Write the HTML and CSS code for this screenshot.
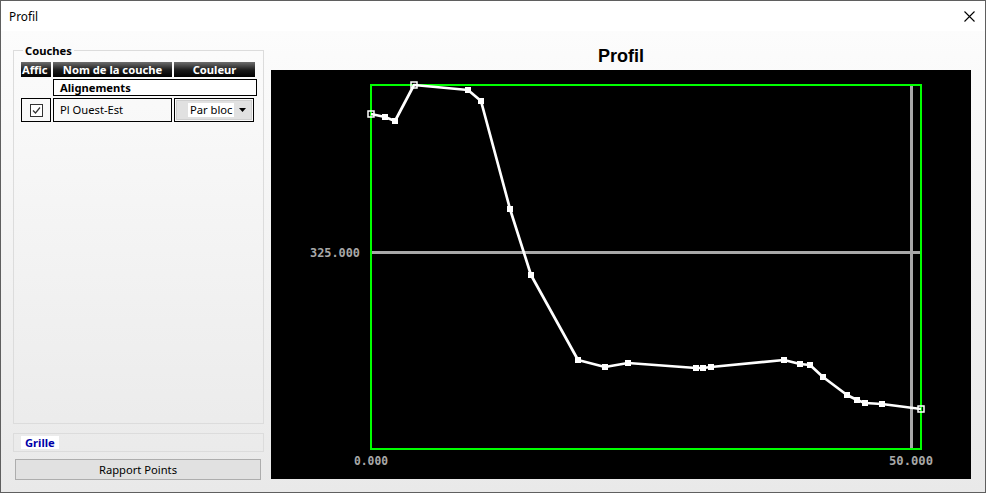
FILE: index.html
```html
<!DOCTYPE html>
<html>
<head>
<meta charset="utf-8">
<title>Profil</title>
<link rel="stylesheet" href="styles.css">
</head>
<body>
<div class="window">
  <div class="titlebar">
    <span class="title">Profil</span>
    <svg class="close" width="11" height="11" viewBox="0 0 11 11"><path d="M0.5 0.5 L10.5 10.5 M10.5 0.5 L0.5 10.5" stroke="#000" stroke-width="1.1" fill="none"/></svg>
  </div>
  <div class="content">
    <div class="left">
      <div class="group couches">
        <div class="legend">Couches</div>
        <div class="hdr">
          <div class="hc c1">Affic</div>
          <div class="hc c2">Nom de la couche</div>
          <div class="hc c3">Couleur</div>
        </div>
        <div class="section">Alignements</div>
        <div class="row">
          <div class="cell c1 chk">
            <svg width="13" height="13" viewBox="0 0 13 13"><rect x="0.5" y="0.5" width="12" height="12" fill="#fff" stroke="#333"/><path d="M3 6.5 L5.5 9 L10 3.5" stroke="#333" stroke-width="1.2" fill="none"/></svg>
          </div>
          <div class="cell c2 name">Pl Ouest-Est</div>
          <div class="cell c3b">
            <div class="combo">
              <span class="val">Par bloc</span>
              <svg class="arrow" width="7" height="4" viewBox="0 0 7 4"><path d="M0 0 H7 L3.5 4 Z" fill="#000"/></svg>
            </div>
          </div>
        </div>
      </div>
      <div class="group grille">
        <div class="glabel">Grille</div>
      </div>
      <button class="btn">Rapport Points</button>
    </div>
    <div class="right">
      <div class="ctitle">Profil</div>
      <div class="chart">
        <svg width="700" height="409" viewBox="271 70 700 409">
          <rect x="271" y="70" width="700" height="409" fill="#000"/>
          <line x1="372" y1="252.5" x2="920" y2="252.5" stroke="#a8a8a8" stroke-width="3"/>
          <line x1="911.5" y1="86" x2="911.5" y2="448" stroke="#a8a8a8" stroke-width="3"/>
          <rect x="371" y="85" width="550" height="364" fill="none" stroke="#00ff00" stroke-width="2"/>
          <polyline fill="none" stroke="#fff" stroke-width="2.7" stroke-linejoin="round" points="371,114 385,117 395,121 414,85 468,90 481,101 510,209 531,275 578,360 605,367 628,363 696,368 703,368 711,367 784,360 800,364 810,365 823,377 847,395 857,400 865,403 882,404 921,409"/>
          <g fill="#fff">
            <rect x="382" y="114" width="6" height="6"/>
            <rect x="392" y="118" width="6" height="6"/>
            <rect x="465" y="87" width="6" height="6"/>
            <rect x="478" y="98" width="6" height="6"/>
            <rect x="507" y="206" width="6" height="6"/>
            <rect x="528" y="272" width="6" height="6"/>
            <rect x="575" y="357" width="6" height="6"/>
            <rect x="602" y="364" width="6" height="6"/>
            <rect x="625" y="360" width="6" height="6"/>
            <rect x="693" y="365" width="6" height="6"/>
            <rect x="700" y="365" width="6" height="6"/>
            <rect x="708" y="364" width="6" height="6"/>
            <rect x="781" y="357" width="6" height="6"/>
            <rect x="797" y="361" width="6" height="6"/>
            <rect x="807" y="362" width="6" height="6"/>
            <rect x="820" y="374" width="6" height="6"/>
            <rect x="844" y="392" width="6" height="6"/>
            <rect x="854" y="397" width="6" height="6"/>
            <rect x="862" y="400" width="6" height="6"/>
            <rect x="879" y="401" width="6" height="6"/>
          </g>
          <g fill="none" stroke="#fff" stroke-width="1.5">
            <rect x="368" y="111" width="6" height="6"/>
            <rect x="411" y="82" width="6" height="6"/>
            <rect x="918" y="406" width="6" height="6"/>
          </g>
          <g class="axis">
            <text x="310" y="257" textLength="50" lengthAdjust="spacingAndGlyphs">325.000</text>
            <text x="354" y="465" textLength="34" lengthAdjust="spacingAndGlyphs">0.000</text>
            <text x="889" y="465" textLength="44" lengthAdjust="spacingAndGlyphs">50.000</text>
          </g>
        </svg>
      </div>
    </div>
  </div>
</div>
</body>
</html>
```
FILE: styles.css
```css
* { box-sizing: border-box; }
html, body { margin: 0; padding: 0; }
body {
  width: 986px;
  height: 493px;
  overflow: hidden;
  font-family: "Noto Sans", "Open Sans", sans-serif;
  font-size: 11.2px;
  color: #000;
  background: #fff;
}
.window {
  width: 986px;
  height: 493px;
  border: 1px solid #5f5f5f;
  display: flex;
  flex-direction: column;
  background: #fff;
}
.titlebar {
  height: 30px;
  flex: none;
  display: flex;
  align-items: center;
  justify-content: space-between;
  padding: 0 10px 0 8px;
  background: #fff;
}
.title { font-size: 11.8px; line-height: 16px; }
.close { display: block; }
.content {
  flex: 1;
  display: flex;
  background: linear-gradient(#fcfcfc, #e9e9e9);
}
.left {
  width: 270px;
  flex: none;
  padding: 19px 0 0 12px;
  display: flex;
  flex-direction: column;
  align-items: flex-start;
}
.group {
  border: 1px solid #dcdcdc;
  width: 251px;
  display: flex;
  flex-direction: column;
  align-items: flex-start;
}
.couches {
  height: 374px;
  padding-left: 7px;
}
.legend {
  margin: -8px 0 0 2px;
  padding: 0 2px;
  height: 16px;
  line-height: 16px;
  font-weight: bold;
  background: #fbfbfb;
}
.hdr {
  display: flex;
  gap: 2px;
  height: 15px;
  margin-top: 3px;
}
.hc {
  background: linear-gradient(#6e6e6e, #1a1a1a 55%, #000);
  color: #fff;
  font-weight: bold;
  line-height: 15px;
  text-align: center;
  white-space: nowrap;
  overflow: hidden;
}
.hc.c1 { text-align: left; padding-left: 1px; }
.c1 { width: 30px; }
.c2 { width: 119px; }
.c3 { width: 81px; }
.section {
  margin: 2px 0 0 32px;
  width: 204px;
  height: 17px;
  border: 1px solid #000;
  background: #fff;
  font-weight: bold;
  line-height: 15px;
  padding-left: 6px;
}
.row {
  display: flex;
  gap: 2px;
  margin-top: 2px;
  height: 24px;
}
.cell {
  border: 1px solid #000;
  height: 24px;
}
.chk {
  display: flex;
  align-items: center;
  justify-content: center;
}
.name {
  padding-left: 6px;
  line-height: 22px;
}
.c3b {
  width: 80px;
  height: 24px;
  border: 1px solid #000;
  padding: 1px;
}
.combo {
  height: 20px;
  border: 1px solid #cfcfcf;
  background: #e1e1e1;
  display: flex;
  align-items: center;
}
.val {
  margin-left: 11px;
  height: 14px;
  line-height: 14px;
  padding: 0 2px;
  background: #fff;
}
.arrow { margin-left: 5px; }
.grille {
  margin-top: 9px;
  height: 19px;
}
.glabel {
  margin: 2px 0 0 7px;
  width: 38px;
  height: 13px;
  line-height: 13px;
  padding-left: 4px;
  background: #fff;
  color: #0000a8;
  font-weight: bold;
}
.btn {
  margin: 7px 0 0 2px;
  width: 246px;
  height: 21px;
  background: #e1e1e1;
  border: 1px solid #adadad;
  font-family: "Noto Sans", "Open Sans", sans-serif;
  font-size: 11.2px;
  color: #000;
  padding: 0;
  line-height: 19px;
}
.right {
  width: 700px;
  flex: none;
  display: flex;
  flex-direction: column;
}
.ctitle {
  height: 39px;
  padding-top: 14px;
  line-height: 22px;
  text-align: center;
  font-family: "Liberation Sans", Arial, sans-serif;
  font-weight: bold;
  font-size: 18px;
}
.chart {
  width: 700px;
  height: 409px;
  background: #000;
}
.chart svg { display: block; }
.axis text {
  font-family: "DejaVu Sans Mono", monospace;
  font-weight: bold;
  font-size: 12.5px;
  fill: #a8a8a8;
}
```
